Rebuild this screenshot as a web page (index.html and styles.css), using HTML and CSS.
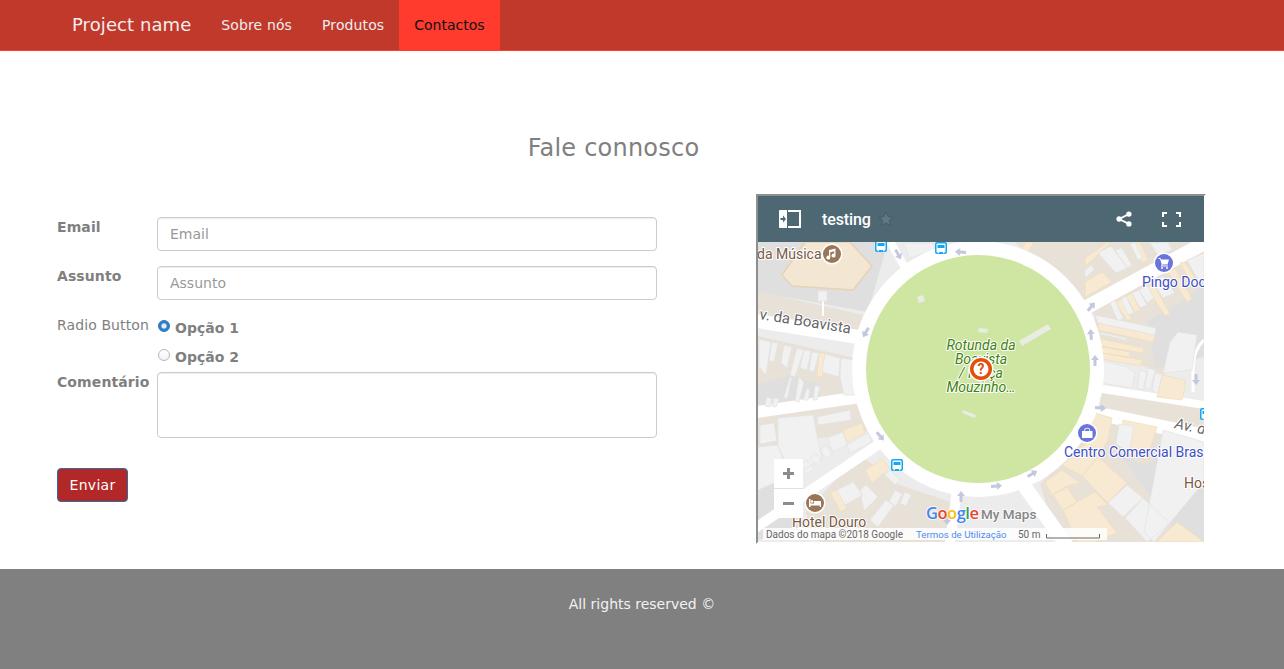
FILE: index.html
```html
<!DOCTYPE html>
<html lang="pt">
<head>
<meta charset="utf-8">
<title>Fale connosco</title>
<link rel="stylesheet" href="styles.css">
</head>
<body>
<nav class="navbar">
  <a class="brand" href="#">Project name</a>
  <ul class="nav-links">
    <li><a href="#">Sobre nós</a></li>
    <li><a href="#">Produtos</a></li>
    <li class="active"><a href="#">Contactos</a></li>
  </ul>
</nav>
<main class="page">
  <h2 class="page-title">Fale connosco</h2>
  <div class="columns">
    <form class="contact-form">
      <div class="form-row">
        <label class="row-label" for="email">Email</label>
        <input class="field" id="email" type="text" placeholder="Email">
      </div>
      <div class="form-row">
        <label class="row-label" for="assunto">Assunto</label>
        <input class="field" id="assunto" type="text" placeholder="Assunto">
      </div>
      <div class="form-row form-row-radio">
        <span class="row-label row-label-plain">Radio Button</span>
        <div class="radio-group">
          <label class="radio"><input class="radio-input" type="radio" name="op" checked>Opção 1</label>
          <label class="radio"><input class="radio-input" type="radio" name="op">Opção 2</label>
        </div>
      </div>
      <div class="form-row form-row-area">
        <label class="row-label" for="comentario">Comentário</label>
        <textarea class="field field-area" id="comentario"></textarea>
      </div>
      <button class="submit" type="button">Enviar</button>
    </form>
    <div class="map-frame">
      <div class="map-header">
        <svg class="hd-icon hd-panel" viewBox="0 0 22 18">
          <path class="ic-white" d="M1 0h7v18H1a1 1 0 0 1-1-1V1a1 1 0 0 1 1-1z"/>
          <path class="ic-line" d="M9 1h12v16H9"/>
          <path class="ic-dark" d="M1.500 8h2.500V5.500L7 9l-3 3.500V10H1.500z"/>
        </svg>
        <span class="map-name">testing</span>
        <svg class="hd-icon hd-star" viewBox="0 0 16 16">
          <path class="ic-star" d="M8 1l2.100 4.700 5 .5-3.800 3.300 1.100 5L8 11.900 3.600 14.500l1.100-5L.9 6.200l5-.5z"/>
        </svg>
        <span class="hd-spacer"></span>
        <svg class="hd-icon hd-share" viewBox="0 0 18 18">
          <circle class="ic-white" cx="14.500" cy="3.500" r="3"/>
          <circle class="ic-white" cx="14.500" cy="14.500" r="3"/>
          <circle class="ic-white" cx="3.500" cy="9" r="3"/>
          <path class="ic-line" d="M14.500 3.500L3.500 9l11 5.500"/>
        </svg>
        <svg class="hd-icon hd-full" viewBox="0 0 19 15">
          <path class="ic-line" d="M1 5V1h4M14 1h4v4M18 10v4h-4M5 14H1v-4"/>
        </svg>
      </div>
      <svg class="map" viewBox="758 242 446 300">
        <defs>
          <path id="arr" class="arrow" d="M0-6l4 5H1.500v6h-3v-6H-4z"/>
          <g id="bus">
            <rect class="bus-bg" x="-6" y="-6" width="12" height="12" rx="2"/>
            <path class="ic-white" d="M-4.500-3.500a1 1 0 0 1 1-1h7a1 1 0 0 1 1 1V4h-1v1.200H2V4h-4v1.200h-1.500V4h-1z"/>
            <rect class="bus-bg" x="-3.500" y="-3" width="7" height="3"/>
          </g>
        </defs>
        <rect class="m-bg" x="758" y="242" width="446" height="300"/>
        <path class="m-gray" d="M758 242h130l-20 70-110-20zM758 490l40-20 0 60-40 10zM1110 460l50-30 44 20v92h-50z"/>
        <path class="m-land" d="M758 291l105 24-6 22-99-18zM758 402l105-12 8 40-113 18zM1015 242h189v10l-110 62-20-20zM1095 300l109-55v80l-40 50-70-30zM758 336l97 22-2 40-95 14zM1090 385l114 20v30l-60 30-50-20zM1040 484l58-60 80 110-20 8h-100zM860 455l40 30 60 20-10 37H820l-15-30zM800 325l57 11v7l-57-10z"/>
        <path class="m-gray" d="M1148 320l34-18 22-19v74l-49 11zM757 385l33-10 30 10v15l-63 13z"/>
        <g class="m-roads">
          <path class="road road-14" d="M750 320l115 18"/>
          <path class="road road-12" d="M750 413l110-16"/>
          <path class="road road-10" d="M745 535l140-95"/>
          <path class="road road-14" d="M1085 308l125-68"/>
          <path class="road road-8" d="M1090 387l120 19"/>
          <path class="road road-14" d="M1095 413l115 24"/>
          <path class="road road-14" d="M1020 480l50 70"/>
          <path class="road road-10" d="M957 490l-8 60"/>
          <path class="road road-8" d="M888 238l16 28"/>
          <path class="road road-2" d="M823 301v15"/>
          <path class="road road-3" d="M1204 340q-11 10-11 30v22"/>
        </g>
        <g class="m-orange">
          <path class="hex" d="M782 275l23-33h45l22 24-19 24-61-4z"/>
          <path d="M1085 258l23-16 2 1-25 24zM1085 282l17-10 10 10-27 15zM1133 243l7-1 8 18-6 3zM1115 302l7-3 10 21-5 0zM1126 296l6-3 8 17-5 2zM1147 287l6-4 17 31-5 2zM1168 272l7-4 17 31-5 3zM1180 263l5-1 13 21-5 4z"/>
          <path d="M1098 323l57 12-2 7-55-12zM1101 339l43 9-1 5-42-7zM1102 347l28 5-1 5-27-4zM1102 353l40 7-1 6-39-7zM1162 375l23 5v7l-3 13-25-3zM819 353h6l-3 24h-5z"/>
          <path d="M1095 413l17 5-4 22-10 17-16 19-20-11 25-23zM1123 420l34 7-10 33-27-10zM1098 457l29 26-19 20-26-27zM1045 482l17-12 18 13-13 3-15 9zM1053 495l14-8 10 15-14 8zM1063 510l32-18 13 13-11 2 20 26-24 9h-16zM1157 542l20-20 27 20z"/>
          <path d="M843 430l19-7 3 10-18 9zM865 470l17-11 8 9-18 15zM830 492l7-2 10 18-6 4zM1026 242l8 0-8 14-6-4z"/>
        </g>
        <g class="m-bldg">
          <path d="M1098 253l13-7 17 22-12 5zM1115 250l7-2 10 17-5 3zM1130 244l5-2 8 16-5 2zM1150 243l18-1 4 8-14 5zM1085 270l7-5 2 5-9 8zM1110 303l5-3 8 18-5 4zM1121 299l5-3 8 17-6 2zM1132 293l7-3 8 15-7 3zM1139 290l8-5 7 13-7 5zM1153 283l10-7 12 17-12 5zM1187 260l17-7v25l-5 4z"/>
          <path d="M1095 315l61 13-1 7-57-12zM1100 332l26 6v2l-26-6zM1100 360l27 7 8 6-3 15-32-5zM1140 370l7 2-4 18-6-2zM1148 368l7 2-5 20-5-2zM1155 373l7 2-4 18-6-2zM1170 342l8-10 19 3-5 35-29 3z"/>
          <path d="M1108 503l19-18 16 13-20 19zM1125 518l18-20 27 25-23 19zM1119 424l15 2-5 26-13-8zM1163 430l41 12v40l-50 60-10-10z"/>
          <path d="M903 243h30l2 7-25 8zM818 291h9v10h-9zM778 418l35-3 9 45-29 15-15-28zM758 447l20-2 10 32-30 13zM817 417l33-7 1 10-33 5zM827 438l16-6 4 13-14 7zM847 445l21-12 4 9-22 11zM760 425l14-2 3 18-17 3zM837 490l16-8 10 13-18 10zM885 475l5-5 10 10-5 5zM860 490l6-5 12 12-14 14zM870 520l16-20 8 5-16 22zM895 490l7 4-6 12-7-4zM905 492l6 3-5 11-6-3zM800 465l7-5 7 9-7 5zM810 458l6-5 6 9-6 5zM820 450l6-5 6 9-6 5z"/>
          <path d="M759 339l12 3-5 33-7-8zM772 342l6 1-4 19-5-2zM784 345l8 2-5 21-6-5zM797 348l7 2-9 27-5-2zM804 350l7 1-4 19-7-2zM812 352l7 1-5 19-5-2zM825 354l15 4-1 19-17-5zM841 358l13 2 1 35-11 0-4-18zM790 377l2 0-5 22-3-2zM799 377l5 5-5 20-4-1zM807 388l3 2-2 10-5 0zM815 385l5 2-3 13-4 0zM767 397l5 2-2 8-5-1zM774 398l5 1-3 8-4-1z"/>
        </g>
        <ellipse class="ring" cx="978" cy="369" rx="126" ry="128"/>
        <ellipse class="park" cx="978" cy="369" rx="112" ry="114"/>
        <g class="m-spots">
          <path d="M917 297l6-2 2 6-6 2zM979 328l9 1-1 4-9-1zM1019 341l29-17 3 5-29 17zM963 410l13 5-1 3-13-5z"/>
        </g>
        <use href="#arr" transform="translate(898 254) rotate(150)"/>
        <use href="#arr" transform="translate(961 252) rotate(-85)"/>
        <use href="#arr" transform="translate(866 332) rotate(-150)"/>
        <use href="#arr" transform="translate(1091 307) rotate(40)"/>
        <use href="#arr" transform="translate(1091 335) rotate(-5)"/>
        <use href="#arr" transform="translate(1095 361)"/>
        <use href="#arr" transform="translate(1100 408) rotate(95)"/>
        <use href="#arr" transform="translate(1032 474) rotate(60)"/>
        <use href="#arr" transform="translate(996 486) rotate(85)"/>
        <use href="#arr" transform="translate(961 497)"/>
        <use href="#arr" transform="translate(880 436) rotate(140)"/>
        <use href="#arr" transform="translate(947 519) rotate(180)"/>
        <use href="#arr" transform="translate(1196 379) rotate(180)"/>
        <use href="#bus" transform="translate(881 246)"/>
        <use href="#bus" transform="translate(941 248)"/>
        <use href="#bus" transform="translate(897 465)"/>
        <use href="#bus" transform="translate(1206 414)"/>
        <text class="t-poi" x="757" y="259">da Música</text>
        <text class="t-road" transform="translate(759 319) rotate(9)">v. da Boavista</text>
        <text class="t-road t-road-it" transform="translate(1174 428) rotate(12)">Av. da</text>
        <text class="t-shop" x="1142" y="287">Pingo Doce</text>
        <text class="t-shop" x="1064" y="457">Centro Comercial Brasília</text>
        <text class="t-poi" x="792" y="527">Hotel Douro</text>
        <text class="t-poi" x="1184" y="488">Hostel</text>
        <text class="t-park" x="981" y="350">Rotunda da</text>
        <text class="t-park" x="981" y="364">Boavista</text>
        <text class="t-park" x="981" y="378">/ Praça</text>
        <text class="t-park" x="981" y="392">Mouzinho…</text>
        <g transform="translate(832 254)">
          <circle class="halo" r="10.500"/><circle class="poi-brown" r="9"/>
          <path class="ic-white" d="M-3-4l6.500-1.500v7a2 2 0 1 1-1.300-1.800V-2.800l-3.900 1V3.500a2 2 0 1 1-1.300-1.800z"/>
        </g>
        <g transform="translate(1164 263)">
          <circle class="halo" r="10.500"/><circle class="poi-blue" r="9"/>
          <path class="ic-white" d="M-5.500-5h2l.5 1.500h8L3.500 1.500h-5l-.3 1H4v1H-3l.7-2.500L-4-4H-5.500z"/>
          <circle class="ic-white" cx="-2" cy="5" r="1"/><circle class="ic-white" cx="3" cy="5" r="1"/>
        </g>
        <g transform="translate(1087 433)">
          <circle class="halo" r="10.500"/><circle class="poi-blue" r="9"/>
          <path class="ic-white" d="M-5-2h2.200a2.900 3.200 0 0 1 6 0H5.500V5h-10.500zM-2-2h4.500a2.200 2.400 0 0 0-4.500 0z"/>
        </g>
        <g transform="translate(815 503)">
          <circle class="halo" r="10.500"/><circle class="poi-brown" r="9"/>
          <path class="ic-white" d="M-6-4h1.500v4.500H-1V-2h7v6H4.800V2.500h-9.300V4H-6z"/>
          <circle class="ic-white" cx="-3" cy="-1.500" r="1.300"/>
        </g>
        <g transform="translate(981 369)">
          <circle class="halo" r="12.500"/><circle class="marker" r="11"/><circle class="marker-in" r="7.500"/>
          <text class="t-mark" y="5">?</text>
        </g>
        <rect class="m-strip" x="763" y="528" width="344" height="12"/>
        <text class="t-attr" x="766" y="538">Dados do mapa ©2018 Google</text>
        <text class="t-link" x="916" y="538">Termos de Utilização</text>
        <text class="t-attr" x="1018" y="538">50 m</text>
        <path class="scale" d="M1046.500 534v4h53v-4"/>
        <text class="t-google" x="926" y="519"><tspan class="g-b">G</tspan><tspan class="g-r">o</tspan><tspan class="g-y">o</tspan><tspan class="g-b">g</tspan><tspan class="g-g">l</tspan><tspan class="g-r">e</tspan></text>
        <text class="t-mymaps" x="981" y="519">My Maps</text>
        <rect class="zoom-box" x="774" y="459" width="29" height="59" rx="1"/>
        <path class="zoom-sep" d="M774 488.500h29"/>
        <path class="zoom-ic" d="M783 472h11v3h-11zM787 468h3v11h-3zM783 502h11v3h-11z"/>
      </svg>
    </div>
  </div>
</main>
<footer class="footer">All rights reserved ©</footer>
</body>
</html>
```
FILE: styles.css
```css
* { box-sizing: border-box; }
html, body { margin: 0; padding: 0; }
body {
  font-family: "DejaVu Sans", sans-serif;
  font-size: 14px;
  line-height: 20px;
  color: #7f7f7f;
  background: #fff;
}
a { text-decoration: none; }

.navbar {
  display: flex;
  height: 51px;
  padding-left: 57px;
  background: #c0392b;
  border-bottom: 1px solid #ff3b2e;
}
.brand {
  padding: 15px;
  font-size: 18px;
  letter-spacing: .08px;
  color: #f3eeee;
}
.nav-links {
  display: flex;
  margin: 0;
  padding: 0;
  list-style: none;
}
.nav-links a {
  display: block;
  padding: 15px;
  letter-spacing: .12px;
  color: #eee;
}
.nav-links .active { background: #ff3b2e; }
.nav-links .active a { color: #111; letter-spacing: 0; }

.page {
  width: 1113px;
  margin-left: 57px;
  padding-top: 80px;
  height: 518px;
}
.page-title {
  margin: 0 0 29px;
  text-align: center;
  font-size: 24px;
  line-height: 34px;
  font-weight: 400;
  letter-spacing: .23px;
  color: #808080;
}
.columns {
  display: grid;
  grid-template-columns: 699px 450px;
}
.contact-form { padding-top: 23px; }
.form-row {
  display: flex;
  margin-bottom: 15px;
}
.row-label {
  flex: 0 0 100px;
  font-weight: 700;
  letter-spacing: .1px;
  white-space: nowrap;
}
.row-label-plain { font-weight: 400; }
.form-row-radio { margin-bottom: 0; height: 57px; }
.field {
  display: block;
  width: 500px;
  height: 34px;
  padding: 6px 12px;
  font: 14px/20px "DejaVu Sans", sans-serif;
  color: #555;
  background: #fff;
  border: 1px solid #ccc;
  border-radius: 4px;
  box-shadow: inset 0 1px 1px rgba(0, 0, 0, .075);
}
.field::placeholder { color: #999; opacity: 1; }
.field-area { height: 66px; resize: none; }
.form-row-area { margin-bottom: 30px; }
.radio-group {
  display: flex;
  flex-direction: column;
  gap: 9px;
  padding-top: 3px;
}
.radio {
  display: flex;
  height: 20px;
  font-weight: 700;
}
.radio-input {
  appearance: none;
  flex: none;
  width: 12px;
  height: 12px;
  margin: 2px 5px 0 1px;
  background: linear-gradient(#fff, #f3f3f3);
  border: 1px solid #b8b8b8;
  border-radius: 50%;
}
.radio-input:checked {
  background: radial-gradient(circle, #e4eef9 0 2px, #2f80c9 3.2px);
  border-color: #2a74b8;
}
.submit {
  display: block;
  width: 71px;
  height: 34px;
  padding: 0;
  font: 14px/20px "DejaVu Sans", sans-serif;
  letter-spacing: .3px;
  color: #fff;
  background: #b22727;
  border: 1px solid #2e6da4;
  border-radius: 4px;
}

.map-frame {
  width: 450px;
  height: 350px;
  border: 2px solid #8f8f8f;
  border-right-color: #fff;
  border-bottom-color: #fff;
  overflow: hidden;
}
.map-header {
  display: flex;
  align-items: center;
  width: 446px;
  height: 46px;
  padding: 0 23px 0 21px;
  background: #4e6873;
}
.hd-icon { display: block; flex: none; }
.hd-panel { width: 22px; height: 18px; margin-right: 21px; }
.map-name {
  font: 500 16px/20px Roboto, sans-serif;
  letter-spacing: -.1px;
  color: #fff;
  margin-top: 2px;
}
.hd-star { width: 16px; height: 16px; margin-left: 7px; }
.hd-spacer { flex: 1; }
.hd-share { width: 16px; height: 16px; margin-right: 30px; }
.hd-full { width: 19px; height: 15px; }
.ic-white { fill: #fff; }
.ic-dark { fill: #4e6873; }
.ic-line { fill: none; stroke: #fff; stroke-width: 2; }
.ic-star { fill: #5f7885; stroke: #445c67; stroke-width: 1; }

.map { display: block; width: 446px; height: 300px; }
.m-bg { fill: #ececec; }
.m-gray { fill: #dfdfdf; }
.m-land { fill: #e8e1d8; }
.road { fill: none; stroke: #fff; }
.road-2 { stroke-width: 2; }
.road-3 { stroke-width: 3; }
.road-8 { stroke-width: 8; }
.road-10 { stroke-width: 10; }
.road-12 { stroke-width: 12; }
.road-14 { stroke-width: 14; }
.m-orange path { fill: #f8ead2; stroke: #f1dcb8; stroke-width: .7; }
.m-orange .hex { fill: #f3e7d4; stroke: #e6d3b4; stroke-width: 1.500; }
.m-bldg path { fill: #f1f1f1; stroke: #e2e2e2; stroke-width: .7; }
.ring { fill: #fff; }
.park { fill: #cee6a1; }
.m-spots path { fill: #e9ece2; }
.arrow { fill: #c3c8de; }
.bus-bg { fill: #12a9f2; }
.halo { fill: #fff; }
.poi-brown { fill: #9b7558; }
.poi-blue { fill: #6a75dc; }
.marker { fill: #e2500d; }
.marker-in { fill: #fff; }
.t-mark {
  font: 700 14px Roboto, sans-serif;
  fill: #e2500d;
  text-anchor: middle;
}
.t-poi, .t-road, .t-shop, .t-park {
  paint-order: stroke;
  stroke: #fff;
  stroke-width: 2px;
  stroke-linejoin: round;
}
.t-poi { font: 14px Roboto, sans-serif; fill: #7a5a45; }
.t-road { font: 15px Roboto, sans-serif; fill: #666; }
.t-road-it { font-style: italic; }
.t-shop { font: 14px Roboto, sans-serif; fill: #3f4fc4; }
.t-park {
  font: italic 14px Roboto, sans-serif;
  fill: #40800c;
  text-anchor: middle;
}
.m-strip { fill: rgba(255, 255, 255, .85); }
.t-attr { font: 10px Roboto, sans-serif; fill: #666; }
.t-link { font: 9.700px Roboto, sans-serif; fill: #4f8cf0; }
.scale { fill: none; stroke: #666; stroke-width: 1; }
.t-google, .t-mymaps {
  paint-order: stroke;
  stroke: rgba(255, 255, 255, .75);
  stroke-width: 2px;
}
.t-google { font: 600 16.500px "Open Sans", sans-serif; letter-spacing: -.5px; }
.t-mymaps { font: 500 13.500px Roboto, sans-serif; fill: #868686; }
.g-b { fill: #4285f4; }
.g-r { fill: #ea4335; }
.g-y { fill: #fbbc05; }
.g-g { fill: #34a853; }
.zoom-box { fill: #fff; }
.zoom-sep { stroke: #e0e0e0; stroke-width: 1; }
.zoom-ic { fill: #8c8c8c; }

.footer {
  height: 100px;
  padding-top: 25px;
  text-align: center;
  color: #f2f2f2;
  background: #808080;
}
```
